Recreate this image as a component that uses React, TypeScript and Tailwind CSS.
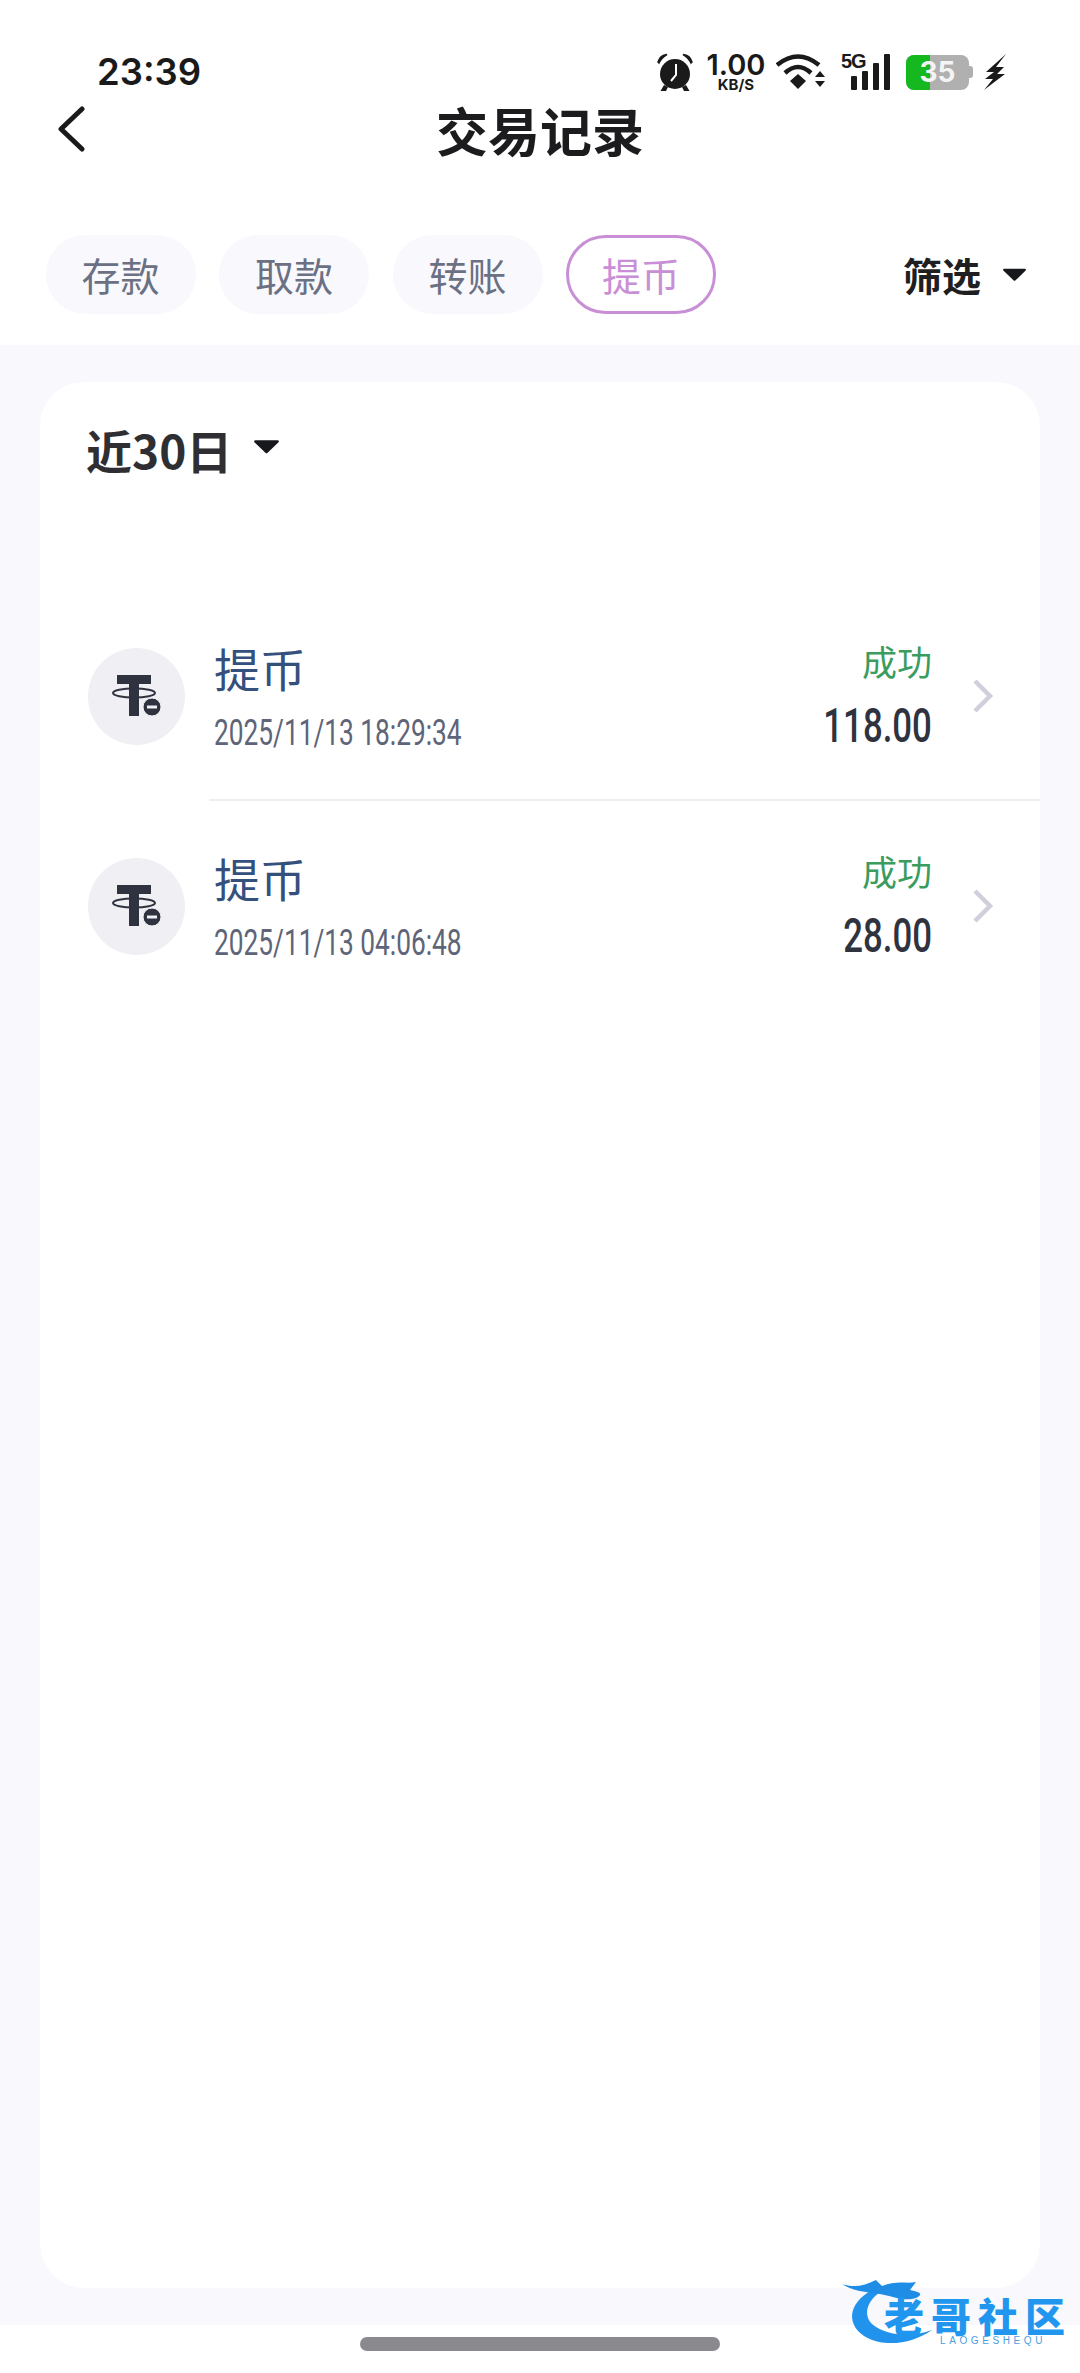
const cjk = "font-['Noto_Sans_CJK_SC','Noto_Sans',sans-serif]";

const tabs = ["存款", "取款", "转账"];

const records = [
  { time: "2025/11/13 18:29:34", amount: "118.00" },
  { time: "2025/11/13 04:06:48", amount: "28.00" },
];

function Caret({ className }: { className: string }) {
  return (
    <svg viewBox="0 0 24 14" className={className}>
      <path d="M2 1.5h20a1 1 0 0 1 .7 1.7L13 12.6a1.4 1.4 0 0 1-2 0L1.3 3.2A1 1 0 0 1 2 1.5z" fill="#17181c" />
    </svg>
  );
}

function Alarm() {
  return (
    <svg viewBox="0 0 38 38" className="w-[38px] h-[38px]">
      <circle cx="19" cy="21" r="15" fill="#1a1a1a" />
      <path d="M2 9 Q4 2 11 1.5 Q6 4 3 10z M36 9 Q34 2 27 1.5 Q32 4 35 10z" fill="#1a1a1a" stroke="#1a1a1a" strokeWidth="1.5" />
      <path d="M8 32 L4.5 38 H10 L12 34z M30 32 L33.5 38 H28 L26 34z" fill="#1a1a1a" />
      <path d="M20 11v11l-5 6" stroke="#fff" strokeWidth="2" fill="none" />
    </svg>
  );
}

function Wifi() {
  return (
    <svg viewBox="0 0 50 36" className="w-[50px] h-[36px]">
      <path d="M1 11 Q22 -6 43 11" stroke="#1a1a1a" strokeWidth="4.5" fill="none" />
      <path d="M9 19 Q22 7 35 19" stroke="#1a1a1a" strokeWidth="4.5" fill="none" />
      <path d="M14 27 L22 20 L30 27 L22 35z" fill="#1a1a1a" />
      <path d="M39 23h10l-5-6z M39 27h10l-5 6z" fill="#1a1a1a" />
    </svg>
  );
}

function Signal() {
  return (
    <div className="relative w-[50px] h-[36px]">
      <svg viewBox="0 0 50 36" className="w-[50px] h-[36px]">
        <rect x="10" y="22" width="6" height="14" rx="1" fill="#1a1a1a" />
        <rect x="21" y="17" width="6" height="19" rx="1" fill="#1a1a1a" />
        <rect x="32" y="9" width="6" height="27" rx="1" fill="#1a1a1a" />
        <rect x="43" y="0" width="6" height="36" rx="1" fill="#1a1a1a" />
      </svg>
      <span className="absolute left-0 top-[-3px] font-['Liberation_Sans',sans-serif] font-bold text-[20px] leading-[20px] tracking-[-1px] text-[#1a1a1a]">5G</span>
    </div>
  );
}

function Battery() {
  return (
    <div className="flex items-center">
      <div className="relative w-[63px] h-[35px] rounded-[8px] overflow-hidden bg-[#b0b0b0] flex items-center justify-center">
        <div className="absolute left-0 top-0 bottom-0 w-[24px] bg-[#16b81f]" />
        <span className="relative font-['Inter',sans-serif] font-bold text-[28px] leading-none text-[#f4f4f4]">35</span>
      </div>
      <div className="w-[4px] h-[12px] rounded-r-[3px] bg-[#b0b0b0]" />
    </div>
  );
}

function Bolt() {
  return (
    <svg viewBox="0 0 22 36" className="w-[22px] h-[36px]">
      <path d="M22 0 L2 18 L10 18 L1 25 L9 25 L0 36 L21 20 L13 20 L20 13 L12 13z" fill="#1a1a1a" />
    </svg>
  );
}

function TetherIcon() {
  return (
    <div className="w-[97px] h-[97px] rounded-full bg-[#f0f0f4] flex items-center justify-center shrink-0">
      <svg viewBox="0 0 50 44" className="w-[50px] h-[44px]">
        <rect x="5" y="1" width="34" height="9" fill="#2f3340" />
        <rect x="17" y="1" width="10" height="41" fill="#2f3340" />
        <ellipse cx="22" cy="19" rx="21" ry="4.5" fill="none" stroke="#2f3340" strokeWidth="2" />
        <circle cx="40" cy="33" r="9" fill="#2f3340" stroke="#f0f0f4" strokeWidth="1" />
        <rect x="35" y="31.5" width="10" height="3" fill="#f0f0f4" />
      </svg>
    </div>
  );
}

function Row({ time, amount, divider }: { time: string; amount: string; divider: boolean }) {
  return (
    <div className="relative h-[210px] flex items-center pl-[48px] pr-[46px]">
      <TetherIcon />
      <div className="ml-[29px] flex-1 pb-[1px]">
        <div className={`${cjk} text-[46px] leading-[56px] text-[#34507c]`}>提币</div>
        <div className="mt-[18px] origin-left scale-x-[.71] whitespace-nowrap font-['Roboto',sans-serif] text-[37px] leading-[40px] text-[#5e6578]">{time}</div>
      </div>
      <div className="flex flex-col items-end mr-[39px]">
        <div className={`${cjk} text-[35px] leading-[42px] text-[#3a9c5e]`}>成功</div>
        <div className="mt-[18px] origin-right scale-x-[.71] font-['Roboto',sans-serif] font-medium text-[49px] leading-[52px] text-[#2f3340]">{amount}</div>
      </div>
      <svg viewBox="0 0 23 36" className="w-[23px] h-[36px]">
        <path d="M4 3 L19 18 L4 33" fill="none" stroke="#cfd0dc" strokeWidth="4.5" />
      </svg>
      {divider && <div className="absolute left-[169px] right-0 bottom-0 h-[2px] bg-[#eeeef1]" />}
    </div>
  );
}

export default function App() {
  return (
    <div className={`relative w-[1080px] h-[2373px] overflow-hidden bg-white ${cjk}`}>
      <div className="h-[345px] bg-white pt-[49px]">
        {/* status bar */}
        <div className="h-[46px] flex items-center justify-between pl-[97px] pr-[74px]">
          <span className="font-['Inter',sans-serif] font-semibold text-[36.5px] leading-none text-[#1a1a1a]">23:39</span>
          <div className="flex items-center">
            <Alarm />
            <div className="ml-[14px] w-[56px] flex flex-col items-center font-['Inter',sans-serif] text-[#1a1a1a]">
              <span className="font-semibold text-[29px] leading-[22px]">1.00</span>
              <span className="mt-[2px] font-bold text-[15px] leading-[13px]">KB/S</span>
            </div>
            <div className="ml-[12px]"><Wifi /></div>
            <div className="ml-[15px]"><Signal /></div>
            <div className="ml-[15px]"><Battery /></div>
            <div className="ml-[11px]"><Bolt /></div>
          </div>
        </div>

        {/* nav */}
        <div className="relative h-[74px] flex items-center justify-center">
          <svg viewBox="0 0 30 46" className="absolute left-[56px] top-[11px] w-[30px] h-[46px]">
            <path d="M26 3 L5 23 L26 43" fill="none" stroke="#1a1a1a" strokeWidth="5" strokeLinecap="round" strokeLinejoin="round" />
          </svg>
          <h1 className="text-[52px] font-bold leading-none -mt-[5px] text-[#1c1c1e]">交易记录</h1>
        </div>

        {/* tabs */}
        <div className="mt-[66px] flex items-center pl-[45.5px] pr-[53px]">
          <div className="flex gap-[23.5px]">
            {tabs.map((t) => (
              <div key={t} className="w-[150px] h-[79px] rounded-full bg-[#f8f8fd] flex items-center justify-center text-[39px] text-[#6b7083]">
                {t}
              </div>
            ))}
            <div className="w-[150px] h-[79px] rounded-full border-[3px] border-[#c98fd6] flex items-center justify-center text-[39px] text-[#c98fd6]">
              提币
            </div>
          </div>
          <div className="ml-auto flex items-center">
            <span className="text-[39px] font-bold leading-none text-[#1f1f22]">筛选</span>
            <Caret className="ml-[21px] w-[25px] h-[15px]" />
          </div>
        </div>
      </div>

      {/* content */}
      <div className="h-[1980px] bg-[#f8f8fd] px-[40px] pt-[37px]">
        <div className="h-[1906px] rounded-[44px] bg-white">
          <div className="h-[209px] pl-[46px] pt-[42px] flex items-start">
            <span className="text-[46px] font-bold leading-[50px] text-[#2f2f33]">近30日</span>
            <Caret className="ml-[21px] mt-[14px] w-[27px] h-[17px]" />
          </div>
          {records.map((r, i) => (
            <Row key={r.time} time={r.time} amount={r.amount} divider={i === 0} />
          ))}
        </div>
      </div>

      {/* home indicator */}
      <div className="h-[48px] bg-white flex justify-center pt-[12px]">
        <div className="w-[360px] h-[14px] rounded-full bg-[#8a8a8e]" />
      </div>

      {/* watermark */}
      <div className="absolute left-[840px] top-[2274px] w-[230px] h-[76px]">
        <svg viewBox="0 0 230 76" className="absolute inset-0 w-[230px] h-[76px]">
          <path d="M36 14 C10 26 4 48 24 62 C44 74 72 70 92 56 C72 64 46 62 32 50 C22 40 28 24 44 16z" fill="#2293ec" />
          <path d="M2 10 C14 14 24 12 36 6 L42 12 C56 6 66 10 76 8 L70 16 C80 18 84 20 76 24 C64 28 52 22 40 20 C28 18 14 18 2 10z" fill="#1f8de6" />
        </svg>
        <span className="absolute left-[44px] top-[23px] font-black text-[40px] leading-[36px] tracking-[7px] whitespace-nowrap text-[#2196ee]">老哥社区</span>
        <span className="absolute left-[100px] top-[61px] font-['Liberation_Sans',sans-serif] text-[10px] leading-[12px] tracking-[3.6px] whitespace-nowrap text-[#4a9fe0]">LAOGESHEQU</span>
      </div>
    </div>
  );
}
